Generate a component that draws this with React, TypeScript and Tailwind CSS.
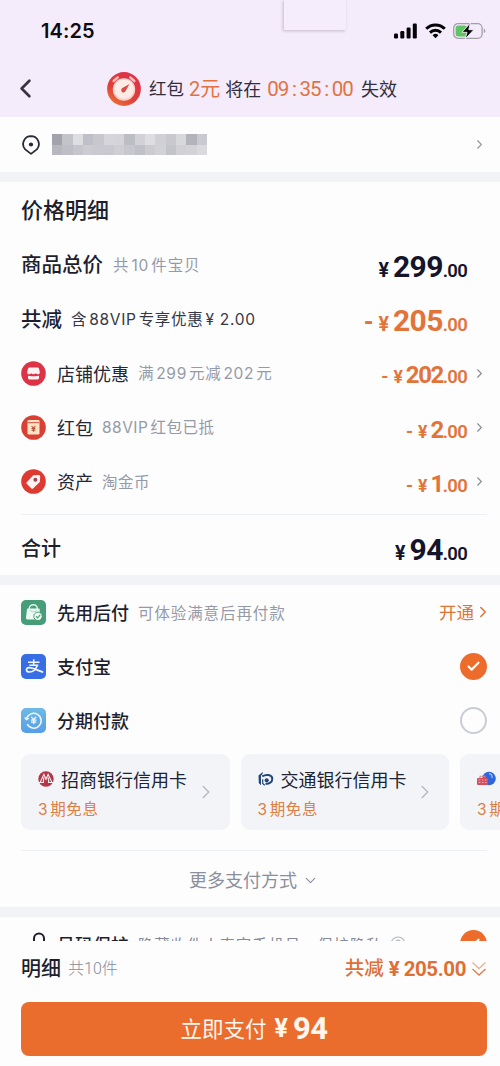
import React from 'react';
import { Check, ChevronDown, ChevronLeft, ChevronRight } from 'lucide-react';

const CELLS = [
  '#a3a3ad', '#c3c3ca', '#dddde2', '#bfbfc7', '#c7c7cd', '#d5d5da', '#d4d4d9', '#bdbdc4', '#d1d1d6', '#dedee2', '#d0d0d5', '#c8c8ce', '#d8d8dc', '#b3b3bb', '#c9c9cf',
  '#b7b7bf', '#bebec5', '#c5c5cb', '#cbcbd1', '#c9c9cf', '#c8c8ce', '#ceced3', '#c7c7ce', '#c0c0c7', '#cbcbd0', '#d1d1d6', '#c3c3ca', '#d0d0d5', '#d2d2d7', '#dadade',
];

function StatusBar() {
  return (
    <div className="relative flex h-[61px] items-center justify-between pl-[41px] pr-[14px]">
      <div className="absolute left-[284px] top-0 h-[30px] w-[62px] bg-[#f5edfb] shadow-[-1px_1px_3px_rgba(90,70,110,0.3)]" />
      <span className="font-['Inter'] text-[20px] font-semibold tracking-[0.1px] text-[#0d0b14]">14:25</span>
      <div className="flex items-center gap-[7px]">
        <svg width="24" height="16" viewBox="0 0 24 16" fill="#050307">
          <rect x="0" y="10.5" width="4" height="5" rx="1.2" />
          <rect x="6.3" y="8" width="4" height="7.5" rx="1.2" />
          <rect x="12.6" y="4.5" width="4" height="11" rx="1.2" />
          <rect x="18.8" y="0.5" width="4" height="15" rx="1.2" />
        </svg>
        <svg width="21" height="16" viewBox="0 0 21 16" fill="none" stroke="#050307" strokeWidth="3">
          <path d="M1.2 5.8a13.2 13.2 0 0 1 18.6 0" />
          <path d="M5 9.6a7.8 7.8 0 0 1 11 0" />
          <path d="M10.5 15.2 7.6 12.2a4.1 4.1 0 0 1 5.8 0z" fill="#050307" stroke="none" />
        </svg>
        <svg width="33" height="18" viewBox="0 0 33 18">
          <rect x="0.7" y="1.7" width="28.4" height="14.6" rx="4.4" fill="none" stroke="#a39da9" strokeWidth="1.3" />
          <rect x="2.6" y="3.6" width="11.5" height="10.8" rx="2.6" fill="#61c466" />
          <path d="M30.8 6.8c2 .5 2 3.9 0 4.4z" fill="#a39da9" />
          <path d="M17.3 1 9 10.3h5L12.2 17l8.6-9.300h-5z" fill="#050307" stroke="#f5edfb" strokeWidth="0.9" />
        </svg>
      </div>
    </div>
  );
}

function TimerIcon() {
  return (
    <svg width="34" height="34" viewBox="0 0 34 34">
      <defs>
        <linearGradient id="timer" x1="0.8" y1="0" x2="0.2" y2="1">
          <stop offset="0" stopColor="#dd304a" />
          <stop offset="0.6" stopColor="#df3f3c" />
          <stop offset="1" stopColor="#ea7433" />
        </linearGradient>
      </defs>
      <circle cx="17" cy="17" r="16.9" fill="url(#timer)" />
      <path d="m6.700 9 4-3.500M23.300 5.500l4 3.500" stroke="#f7b7b4" strokeWidth="2.6" strokeLinecap="round" />
      <circle cx="17" cy="17.500" r="11.200" fill="#f9cfc8" />
      <circle cx="17" cy="17" r="9.800" fill="#fdebe6" />
      <path d="m22.500 12-3.800 6.800a2.300 2.300 0 1 1-3.300-2.700z" fill="#dc4a48" />
    </svg>
  );
}

function StoreIcon() {
  return (
    <svg width="25" height="25" viewBox="0 0 25 25">
      <circle cx="12.5" cy="12.5" r="12.3" fill="#dd3347" />
      <path d="M8.700 6.500h7.600c.9 0 1.500.5 1.700 1.300l.8 3.200c.2 1.500-.8 2.300-1.900 2.300-.9 0-1.500-.4-2-1-.6.7-1.400 1-2.400 1s-1.800-.3-2.400-1c-.5.6-1.100 1-2 1-1.100 0-2.100-.8-1.900-2.300L7 7.800c.2-.8.8-1.300 1.700-1.300z" fill="#fff1f2" />
      <path d="M7 14.800c1.800.5 3.200.4 5.500.4s3.700.1 5.500-.4v2.200c0 .9-.6 1.400-1.500 1.400h-8c-.9 0-1.500-.5-1.500-1.400z" fill="#fff1f2" />
    </svg>
  );
}

function PacketIcon() {
  return (
    <svg width="25" height="25" viewBox="0 0 25 25">
      <circle cx="12.5" cy="12.5" r="12.3" fill="#da3f33" />
      <rect x="6.5" y="5" width="12" height="14.5" rx="1.2" fill="#fbe3c4" />
      <path d="M6.500 7.600h12" stroke="#dd6050" strokeWidth="1.1" fill="none" />
      <path d="m10.600 11 1.900 2.200 1.900-2.200M12.5 13.200v3.600M10.600 13.600h3.800M10.600 15.300h3.800" stroke="#b9503f" strokeWidth="1.1" fill="none" />
    </svg>
  );
}

function TagIcon() {
  return (
    <svg width="25" height="25" viewBox="0 0 25 25">
      <circle cx="12.5" cy="12.5" r="12.3" fill="#dd3a31" />
      <path d="M12.3 6.300 17.600 6a1.5 1.5 0 0 1 1.6 1.600l-.4 5.300-6.400 6.400c-.7.7-1.500.7-2.200 0l-4.200-4.200c-.7-.7-.7-1.500 0-2.200z" fill="#fff4f1" />
      <circle cx="14.400" cy="10.800" r="2" fill="#a34552" />
    </svg>
  );
}

function BagIcon() {
  return (
    <svg width="25" height="25" viewBox="0 0 25 25">
      <rect width="25" height="25" rx="5" fill="#469d78" />
      <path d="M8.300 9.500V8.700a4 4 0 0 1 8 0v.8" stroke="#dff5ea" strokeWidth="1.5" fill="none" />
      <path d="M7.200 8.600h10.300c.7 0 1.200.5 1.200 1.200v8c0 1-.6 1.700-1.500 1.700H6.500c-.9 0-1.600-.7-1.500-1.700l.9-8c.1-.7.6-1.200 1.300-1.200z" fill="#eefaf4" />
      <path d="M9 10.200c.5 2 6.200 2 6.700 0" stroke="#9bd0b8" strokeWidth="0.9" fill="none" />
      <circle cx="17" cy="16.300" r="4.200" fill="#eefaf4" stroke="#469d78" strokeWidth="1" />
      <path d="m15 16.300 1.500 1.500 2.700-2.900" stroke="#469d78" strokeWidth="1.2" fill="none" />
    </svg>
  );
}

function AlipayIcon() {
  return (
    <svg width="25" height="25" viewBox="0 0 25 25" fill="none" stroke="#f1f6ff">
      <rect width="25" height="25" rx="5" fill="#376ee3" stroke="none" />
      <path d="M7 8.300h11.500M12.700 5.300v6M8.400 11.300h8.800" strokeWidth="1.500" />
      <path d="M16.500 11c-1.300 3.400-4 7-7.800 7-4.200 0-4.200-4.200-.7-4.300 4.200-.1 8.800 2.900 14.300 4.600" strokeWidth="1.700" />
    </svg>
  );
}

function InstalmentIcon() {
  return (
    <svg width="25" height="25" viewBox="0 0 25 25" fill="none" stroke="#eef9ff">
      <defs>
        <linearGradient id="instalment" x1="0" y1="0" x2="0" y2="1">
          <stop offset="0" stopColor="#6fbae4" />
          <stop offset="1" stopColor="#559ee8" />
        </linearGradient>
      </defs>
      <rect width="25" height="25" rx="5" fill="url(#instalment)" stroke="none" />
      <path d="M5.600 10.800a7.400 7.400 0 1 1 .6 5.400" strokeWidth="1.5" />
      <path d="m3.700 9.500 1.800 2.200 2.300-1.500" strokeWidth="1.3" />
      <path d="m10.300 8.800 2.400 2.800 2.400-2.800M12.700 11.600v4.700M10 12.100h5.400M10 14.100h5.400" strokeWidth="1.3" />
    </svg>
  );
}

function CmbLogo() {
  return (
    <svg width="16" height="16" viewBox="0 0 16 16">
      <circle cx="8" cy="8" r="7.7" fill="#b33648" />
      <path d="M2.200 11.300 5.900 3.300l2.100 5 2.100-5 3.700 8M5.200 11.300l.7-5M10.800 11.300l-.7-5M1 11.500h5M10 11.500h5" stroke="#faeef0" strokeWidth="1.1" fill="none" />
    </svg>
  );
}

function BocomLogo() {
  return (
    <svg width="16" height="16" viewBox="0 0 16 16" fill="none">
      <path d="M.5 4.500 4.700 1v1.800L3 4.800v9.400L.8 12z" fill="#254777" />
      <path d="M4.300 5.300C8 3 14.300 3.500 14.300 8c0 3.800-4 5.300-6.800 4.600" stroke="#254777" strokeWidth="2" />
      <path d="M4.700 8.300v4.200l2 1.800" stroke="#254777" strokeWidth="1.2" />
      <circle cx="8.700" cy="9.300" r="2.100" fill="#254777" />
    </svg>
  );
}

function HuabeiLogo() {
  return (
    <svg width="19" height="16" viewBox="0 0 19 16">
      <circle cx="12" cy="7.500" r="6.800" fill="#2f66dc" />
      <path d="M12 2.500c2.500.5 3.500 2.500 3 4.500" stroke="#8fc0fa" strokeWidth="1.3" fill="none" />
      <rect x="0" y="7" width="11" height="7" rx="1" fill="#d84c5b" />
      <path d="M3 7V5.200h5V7" stroke="#d87f9a" strokeWidth="1.1" fill="none" />
      <path d="M1.500 9h2M5 9h1.500M8 9h1.500M1.500 11.500h2M5 11.500h1.500M8 11.500h1.500" stroke="#f5b6bd" strokeWidth="0.9" fill="none" />
    </svg>
  );
}

// Adds a little air between Chinese characters and runs of Latin text
function Mixed({ text }: { text: string }) {
  const parts = text.split(/([\x20-\x7e¥]+)/).filter(Boolean);
  return (
    <>
      {parts.map((part, i) =>
        /^[\x20-\x7e¥]/.test(part) ? (
          <span key={i} className={i === 0 ? 'pr-[2px]' : i === parts.length - 1 ? 'pl-[2px]' : 'px-[2px]'}>
            {part}
          </span>
        ) : (
          part
        ),
      )}
    </>
  );
}

type AmountProps = {
  whole: string;
  large?: boolean;
  minus?: boolean;
  link?: boolean;
};

function Amount({ whole, large, minus, link }: AmountProps) {
  return (
    <div className="ml-auto flex items-center">
      <div className={`relative top-[2px] flex items-baseline font-['Roboto'] font-bold leading-none ${minus ? 'text-[#e2743a]' : 'text-[#14152a]'}`}>
        {minus && <span className={large ? 'mr-[5px] text-[25px]' : 'mr-[5px] text-[18px]'}>-</span>}
        <span className={large ? 'mr-[4px] text-[19.5px]' : 'mr-[3px] text-[17.5px]'}>¥</span>
        <span className={large ? 'text-[30px] tracking-[-0.02em]' : 'text-[24px] tracking-[-0.06em]'}>{whole}</span>
        <span className="text-[18.5px] font-semibold tracking-[-0.04em]">.00</span>
      </div>
      <div className="flex w-[20px] justify-end">
        {link && <ChevronRight size={15} strokeWidth={1.7} className="text-[#868b96]" />}
      </div>
    </div>
  );
}

type PriceRowProps = {
  icon: React.ReactNode;
  name: string;
  note: string;
  noteClass: string;
  whole: string;
};

function PriceRow({ icon, name, note, noteClass, whole }: PriceRowProps) {
  return (
    <div className="flex h-[54.3px] items-center">
      {icon}
      <span className="ml-[11px] pt-[2px] text-[18px] text-[#242735]">{name}</span>
      <span className={`ml-[9px] pt-[1px] text-[15.5px] text-[#959aa8] ${noteClass}`}>
        <Mixed text={note} />
      </span>
      <Amount whole={whole} minus link />
    </div>
  );
}

function BankCard({ logo, name }: { logo: React.ReactNode; name: string }) {
  return (
    <div className="flex h-[76px] w-[208.5px] shrink-0 items-center rounded-[9px] bg-[#f2f4f8] pl-[17px] pr-[13px]">
      <div className="flex flex-1 flex-col gap-[2px] whitespace-nowrap pt-[5px]">
        <div className="flex h-[27px] items-center gap-[7px] text-[18px] text-[#202331]">
          <span className="-mt-[3px] shrink-0">{logo}</span>
          <span>{name}</span>
        </div>
        <span className="h-[27px] text-[15.5px] leading-[27px] tracking-[0.6px] text-[#df7e43]">
          <Mixed text="3期免息" />
        </span>
      </div>
      <ChevronRight size={22} strokeWidth={1.7} className="-ml-[4px] text-[#b7bbc4]" />
    </div>
  );
}

function Checked() {
  return (
    <span className="ml-auto flex size-[27px] items-center justify-center rounded-full bg-[#ee6c2b]">
      <Check size={15} strokeWidth={3.4} className="text-white" />
    </span>
  );
}

export default function App() {
  return (
    <div className="flex h-[1066px] w-[500px] flex-col overflow-hidden whitespace-nowrap bg-[#fdfdfe] font-['Inter','Noto_Sans_CJK_SC',sans-serif] leading-normal">
      <div className="h-[941px] overflow-hidden">
        <header className="h-[117px] bg-[#f4ebfb]">
          <StatusBar />
          <div className="flex h-[56px] items-center pl-[13px]">
            <ChevronLeft size={31} strokeWidth={2.1} className="-ml-[3px] -mt-[1px] text-[#383443]" />
            <div className="ml-[66px] flex items-center">
              <TimerIcon />
              <span className="ml-[8px] pt-[1px] text-[17.5px] text-[#332e3b]">红包</span>
              <span className="ml-[5px] font-['Roboto','Noto_Sans_CJK_SC',sans-serif] text-[20px] text-[#e1733f]">2元</span>
              <span className="ml-[5px] pt-[1px] text-[18px] text-[#332e3b]">将在</span>
              <span className="ml-[6px] font-['Roboto'] text-[20.5px] tracking-[-0.9px] text-[#e1733f]">
                09<i className="inline-block w-[11px] text-center not-italic">:</i>35<i className="inline-block w-[11px] text-center not-italic">:</i>00
              </span>
              <span className="ml-[8px] pt-[1px] text-[18px] text-[#332e3b]">失效</span>
            </div>
          </div>
        </header>

        {/* Delivery address, masked */}
        <div className="flex h-[55px] items-center pl-[21px] pr-[13px]">
          <svg width="20" height="20" viewBox="0 0 20 20" className="shrink-0">
            <path d="M10 1.200a7.900 7.900 0 0 1 5.800 13.200L10 18.900l-5.800-4.500A7.900 7.900 0 0 1 10 1.200z" fill="none" stroke="#282936" strokeWidth="1.8" strokeLinejoin="round" />
            <circle cx="10" cy="9.500" r="2.100" fill="#282936" />
          </svg>
          <div className="ml-[11px] grid h-[21px] w-[155px] grid-cols-15">
            {CELLS.map((color, i) => (
              <span key={i} style={{ backgroundColor: color }} />
            ))}
          </div>
          <ChevronRight size={15} strokeWidth={1.8} className="ml-auto text-[#9296a0]" />
        </div>

        <div className="h-[10px] bg-[#f1f3f7]" />

        <section className="pl-[21px] pr-[13px]">
          <h2 className="flex h-[55.5px] items-center pt-[2px] text-[22px] font-medium text-[#1d1f2e]">价格明细</h2>
          <div className="flex h-[54.3px] items-center">
            <span className="pt-[2px] text-[20.5px] font-medium text-[#1d1f2e]">商品总价</span>
            <span className="ml-[10px] pt-[1px] text-[15.5px] tracking-[0.9px] text-[#959aa8]">
              <Mixed text="共10件宝贝" />
            </span>
            <Amount whole="299" large />
          </div>
          <div className="flex h-[54.3px] items-center">
            <span className="pt-[2px] text-[20.5px] font-medium text-[#1d1f2e]">共减</span>
            <span className="ml-[9px] pt-[1px] text-[15.5px] tracking-[0.7px] text-[#353844]">
              <Mixed text="含88VIP专享优惠¥ 2.00" />
            </span>
            <Amount whole="205" large minus />
          </div>
          <PriceRow icon={<StoreIcon />} name="店铺优惠" note="满299元减202元" noteClass="tracking-[0.7px]" whole="202" />
          <PriceRow icon={<PacketIcon />} name="红包" note="88VIP红包已抵" noteClass="tracking-[0.5px]" whole="2" />
          <PriceRow icon={<TagIcon />} name="资产" note="淘金币" noteClass="tracking-[0.5px]" whole="1" />
          <div className="mt-[5px] flex h-[61px] items-center border-t-[1.5px] border-[#edeff2] pt-[6px]">
            <span className="pt-[2px] text-[20px] font-medium text-[#1d1f2e]">合计</span>
            <Amount whole="94" large />
          </div>
        </section>

        <div className="h-[10px] bg-[#f1f3f7]" />

        <section className="h-[322px] pl-[21px]">
          <div className="flex h-[54.4px] items-center pr-[13px]">
            <BagIcon />
            <span className="ml-[11px] pt-[2px] text-[18px] font-medium text-[#1d1f2e]">先用后付</span>
            <span className="ml-[9px] pt-[2px] text-[15.5px] tracking-[0.9px] text-[#959aa8]">可体验满意后再付款</span>
            <span className="ml-auto pt-[2px] text-[17.5px] text-[#df7436]">开通</span>
            <ChevronRight size={18} strokeWidth={2} className="-mr-[5px] text-[#df7436]" />
          </div>
          <div className="flex h-[54.4px] items-center pr-[13px]">
            <AlipayIcon />
            <span className="ml-[11px] pt-[2px] text-[18px] font-medium text-[#1d1f2e]">支付宝</span>
            <Checked />
          </div>
          <div className="flex h-[54.4px] items-center pr-[13px]">
            <InstalmentIcon />
            <span className="ml-[11px] pt-[2px] text-[18px] font-medium text-[#1d1f2e]">分期付款</span>
            <span className="ml-auto size-[27px] rounded-full border-2 border-[#c9ccd4]" />
          </div>
          <div className="mt-[6px] flex gap-[11px] overflow-hidden">
            <BankCard logo={<CmbLogo />} name="招商银行信用卡" />
            <BankCard logo={<BocomLogo />} name="交通银行信用卡" />
            <BankCard logo={<HuabeiLogo />} name="花呗分期" />
          </div>
          <div className="mr-[13px] mt-[20px] flex h-[58px] items-center justify-center border-t border-[#edeff2] pt-[2px] text-[18px] text-[#8b8f9c]">
            更多支付方式
            <ChevronDown size={17} strokeWidth={1.6} className="ml-[5px]" />
          </div>
        </section>

        <div className="h-[10px] bg-[#f1f3f7]" />

        <div className="flex h-[54px] items-center pl-[30px] pr-[13px]">
          <svg width="18" height="24" viewBox="0 0 18 24" fill="none" stroke="#1d1f2e" strokeWidth="2">
            <path d="M4 12V6.500a5 5 0 0 1 10 0V12" />
            <rect x="2" y="12" width="14" height="10" rx="2" />
          </svg>
          <span className="ml-[9px] pt-[4px] text-[18px] font-medium text-[#1d1f2e]">号码保护</span>
          <span className="ml-[9px] pt-[4px] text-[15.5px] tracking-[0.8px] text-[#858a98]">隐藏收件人真实手机号，保护隐私</span>
          <svg width="16" height="16" viewBox="0 0 16 16" fill="none" stroke="#b3b7c0" className="ml-[7px]">
            <circle cx="8" cy="8" r="7" strokeWidth="1.2" />
            <path d="M5.800 6.300c0-3 4.500-2.800 4.400 0 0 1.200-2.200 1.500-2.200 3M8 11v1.300" strokeWidth="1.2" />
          </svg>
          <Checked />
        </div>
      </div>

      <footer className="h-[125px] pl-[21px] pr-[13px]">
        <div className="flex h-[55px] items-center">
          <span className="pt-[1px] text-[20px] font-medium text-[#1d1f2e]">明细</span>
          <span className="ml-[7px] pt-[1px] font-['Roboto','Noto_Sans_CJK_SC',sans-serif] text-[16px] font-light text-[#868b9a]">共10件</span>
          <span className="ml-auto pt-[1px] text-[19.5px] font-medium text-[#df6f34]">共减</span>
          <span className="ml-[5px] pt-[1px] font-['Roboto'] text-[20.5px] font-bold text-[#df6f34]">¥</span>
          <span className="ml-[4px] pt-[1px] font-['Roboto'] text-[20.5px] font-bold tracking-[-0.4px] text-[#df6f34]">205.00</span>
          <svg width="16" height="18" viewBox="0 0 16 18" fill="none" stroke="#df7f4b" strokeWidth="1.3" className="ml-[5px]">
            <path d="m1.500 2.500 6.500 6 6.500-6" opacity="0.6" />
            <path d="m1.500 9 6.500 6 6.500-6" />
          </svg>
        </div>
        <button className="mt-[6px] flex h-[54px] w-full items-center justify-center rounded-[8px] bg-[#eb6d2d] text-[21.5px] text-[#fff6ee]">
          <span>立即支付</span>
          <span className="ml-[8px] font-['Roboto'] text-[25px] font-bold">¥</span>
          <span className="ml-[5px] font-['Roboto'] text-[31px] font-bold tracking-[-0.5px]">94</span>
        </button>
      </footer>
    </div>
  );
}
